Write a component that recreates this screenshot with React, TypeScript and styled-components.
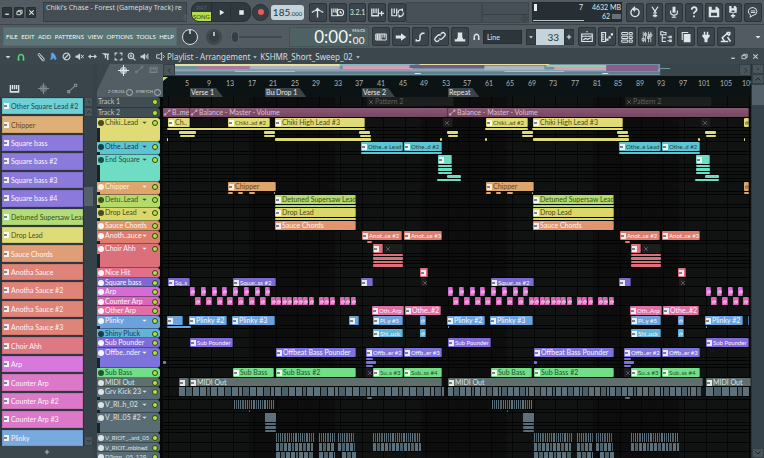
import React from "react";
import styled, { createGlobalStyle, css } from "styled-components";

const NARROW = `Lato, "Noto Sans", sans-serif`;
const UI = `"Noto Sans", "Open Sans", sans-serif`;

const GlobalStyle = createGlobalStyle`
  *, *::before, *::after { box-sizing: border-box; }
  html, body, #root { height: 100%; margin: 0; }
  body { background: #3b464c; color: #dfe7ea; font: 7px/10px ${UI}; overflow: hidden; }
  button, input, select { font: inherit; color: inherit; margin: 0; padding: 0; border: 0; background: none; }
  button { display: inline-flex; align-items: center; justify-content: center; cursor: pointer; }
`;

/* ---------- glyphs ---------- */

type GlyphName = keyof typeof GLYPHS;

const GLYPHS = {
  min: <path d="M3 12h8" strokeWidth="3" />,
  restore: <path d="M2 6h9v7H2zM5 6V3h9v7h-3" strokeWidth="2" />,
  close: <path d="M3 3l10 10M13 3L3 13" strokeWidth="2.4" />,
  play: <path d="M5 3l8 5-8 5z" fill="currentColor" stroke="none" />,
  stop: <path d="M4 4h8v8H4z" fill="currentColor" stroke="none" />,
  metronome: <path d="M1 8q7-6 14 0M8 14V3M5 6l3-3 3 3" strokeWidth="1.6" />,
  wait: <path d="M1 3v9h7V3M3.500 3v5M6 3v5M1 12h8M11.500 4a4 4 0 1 0 .1 0M11.500 6v2.500h2" strokeWidth="1.500" />,
  overdub: <path d="M1 3v9h8V3M3.500 3v6M6.300 3v6M1 12h8M10 9h6M13 6v6" strokeWidth="1.600" />,
  loop: <path d="M1 3v9h6V3M4 3v6M9 9a3 3.500 0 0 1 5-3.500V3M15 8a3 3.500 0 0 1-5 3.500V14" strokeWidth="1.500" />,
  piano: <path d="M1 4h14v8H1zM1 6.600h7M1 9.300h7M3.300 4v8M5.600 4v8M8 4v8M10.500 4v5M13 4v5" strokeWidth="1.300" />,
  keys: <path d="M2 3v10h12V3M5 3v6M8 3v6M11 3v6M2 12.500h12" strokeWidth="2" />,
  arrow: <path d="M1 6h7V3l7 5-7 5v-3H1z" fill="currentColor" stroke="none" />,
  note: <path d="M3 13h3q2 0 2-3V7q0-3 4-4M10 3h4M3 11v3" strokeWidth="2" />,
  link: <path d="M7 12l-1 1q-2 2-4 0t0-4l3-3q2-2 4 0M9 4l1-1q2-2 4 0t0 4l-3 3q-2 2-4 0" strokeWidth="1.700" />,
  hat: <path d="M5 2h6v7H5zM1 11h14v3H1zM4 9h8v2H4z" fill="currentColor" stroke="none" />,
  magnet: <path d="M4 14V8a4 4 0 0 1 8 0v6M2.500 12h3M10.500 12h3" strokeWidth="2.400" />,
  undo: <path d="M5 4A5.500 5.500 0 1 0 11 4M11 4H6M8 1L5 4l3 3" strokeWidth="1.800" />,
  cut: <path d="M4 1l6 9M12 1L6 10M8 10v5M5 13h6" strokeWidth="1.800" />,
  mic: <><path d="M6 1h4v8H6z" fill="currentColor" stroke="none" /><path d="M3.500 6v3q0 3 4.500 3t4.500-3V6M8 12v3M5 15h6" strokeWidth="1.500" /></>,
  help: <path d="M5 5q0-3.500 3.300-3.500T11.500 5q0 1.500-2 2.600T8 10.500M8 12.500v2.500" strokeWidth="2.400" />,
  save: <path fillRule="evenodd" d="M1 1h11l3 3v11H1zM4 9v4h8V9zM5 1v4h5V1z" fill="currentColor" stroke="none" />,
  saveAs: <><path fillRule="evenodd" d="M3 0h8l2 2v7H3zM6 6v2h4V6zM6 0v3h3V0z" fill="currentColor" stroke="none" /><path d="M8 10v6M5 13h6" strokeWidth="1.800" /></>,
  chat: <path d="M8 2a6 5.300 0 0 0-3 10l-1 3 4-2.500A6 5.300 0 0 0 8 2M5 6.500h6M5 8.700h6" strokeWidth="1.300" />,
  playlist: <path d="M1 4h14v10H1zM1 7h14M3 12l3-2 3 1 4-2M7 1h2" strokeWidth="1.600" />,
  roll: <><path d="M1 2h5v12H1zM1 5h3M1 8h3M1 11h3" strokeWidth="1.600" /><path d="M7 10h3v3H7zM10 7h3v3h-3zM13 3h3v3h-3z" fill="currentColor" stroke="none" /></>,
  rack: <path d="M1 2h8v3H1zM1 7h8v3H1zM1 12h8v3H1zM11 2h4v3h-4zM11 7h4v3h-4zM11 12h4v3h-4z" strokeWidth="1.300" />,
  mixer: <path d="M3 1v14M6 1v14M10 1v14M13 1v14M1.500 10h3v3h-3zM4.700 3h3v3h-3zM8.500 7h3v3h-3zM11.500 4h3v3h-3z" strokeWidth="1" />,
  browser: <path d="M1 5V1h3l1 1h3v3zM3 5v9h5M3 9h5M10 8h2M10 13h2M13 7h2v2h-2zM13 12h2v2h-2z" strokeWidth="1.400" />,
  copy: <><path d="M5 4h9v11H5z" fill="currentColor" stroke="none" /><path d="M3 12V2h8" strokeWidth="1.500" /></>,
  plug: <path d="M5 1h2v4h2V1h2v4h2v2l-3 4v4H6v-4L3 7V5h2z" fill="currentColor" stroke="none" />,
  lamp: <path d="M1 14h10M6 14L3 9l7-6M8 3l5 3M10 8l4 6M9 2h4v3" strokeWidth="2" />,
  pencil: <path d="M3 4l2-2 8 9v3h-3zM5 2l8 9M4 5l7 8" strokeWidth="1.300" />,
  brush: <path d="M4 2q4-1 6 3l3 7-2 2-3-4-5 4 1-6z" fill="currentColor" stroke="currentColor" />,
  ban: <path d="M8 2a6 6 0 1 0 .1 0M4 12l8-8" strokeWidth="2" />,
  mute: <><path d="M1 6h3l5-4v12L4 10H1z" fill="currentColor" stroke="none" /><path d="M10.500 5l5 6M15.500 5l-5 6" strokeWidth="1.700" /></>,
  slip: <path d="M0 8l5-4v3h6V4l5 4-5 4V9H5v3z" fill="currentColor" stroke="none" />,
  slice: <><path d="M1 2h8v5z" fill="currentColor" stroke="none" /><path d="M8 5v6M12 4v10M9 4h5" strokeWidth="2.500" /></>,
  marquee: <path d="M2 6V2h4M10 2h4v4M14 10v4h-4M6 14H2v-4" strokeWidth="2" />,
  zoom: <path d="M7 2a5 5 0 1 0 .1 0M11 11l4 4M4.500 7h5M7 4.500v5" strokeWidth="2" />,
  speaker: <><path d="M1 6h3l5-4v12L4 10H1z" fill="currentColor" stroke="none" /><path d="M11 5v6M14 3v10" strokeWidth="1.700" /></>,
  preview: <path d="M1 5h5l4-4v14l-4-4H1zM12 5l3 3-3 3" strokeWidth="1.700" />,
  wave: <path d="M0 8h16M4 5v6M6 3v10M8 0v16M10 3v10M12 5v6" strokeWidth="1.500" />,
  automation: <path d="M2 13l10-9M1 14h3v-3H1zM11 5h3V2h-3z" strokeWidth="1.600" />,
  down: <path d="M3 6h10l-5 5z" fill="currentColor" stroke="none" />,
  chevDown: <path d="M3 5l5 5 5-5" strokeWidth="2" />,
  chevUp: <path d="M3 11l5-5 5 5" strokeWidth="2" />,
  chevLeft: <path d="M10 3L5 8l5 5" strokeWidth="2" />,
  chevRight: <path d="M6 3l5 5-5 5" strokeWidth="2" />,
  plus: <path d="M8 2v12M2 8h12" strokeWidth="3" />,
  dot: <path d="M6 8h4" strokeWidth="3" />,
  clock: <path d="M8 2a6 6 0 1 0 .1 0M8 5v3h3" strokeWidth="1.600" />,
};

const Svg = styled.svg`flex: none; display: block; fill: none; stroke: currentColor;`;
const Glyph = ({ name, size = 10 }: { name: GlyphName; size?: number }) => (
  <Svg width={size} height={size} viewBox="0 0 16 16" aria-hidden="true">{GLYPHS[name]}</Svg>
);

/* ---------- toolbars ---------- */

const Shell = styled.div`display: flex; flex-direction: column; height: 100vh; overflow: hidden;`;

const Bar = styled.div<{ $tone?: "upper" | "lower" }>`
  flex: none; display: flex; align-items: center; height: ${p => (p.$tone === "upper" ? 25 : 24)}px;
  padding: 0 2px; background: #515b61; border-bottom: 1px solid #3a4449;
`;
const Space = styled.div<{ $w: number }>`flex: none; width: ${p => p.$w}px;`;
const Grow = styled.div`flex: 1;`;

const WindowButtons = styled.div`display: flex; gap: 2px; width: 36px; flex: none;`;
const WindowButton = styled.button`
  width: 10px; height: 11px; background: #2d363b; border: 1px solid #252d31; border-radius: 1px; color: #dfe7ea;
`;
const Hint = styled.div`
  flex: none; display: flex; justify-content: space-between; width: 144px; height: 20px; margin-left: 5px;
  padding: 0 2px; background: #434d52; border: 1px solid #353f44; font: 7px/10px ${UI}; white-space: nowrap; color: #d4dcdf;
`;
const HintIcon = styled.span`align-self: flex-end; color: #59646a;`;

const Transport = styled.div`
  flex: none; display: grid; grid-template-columns: 20px 19px 20px; width: 60px; height: 20px; margin-left: 4px;
  background: #30393e; border: 1px solid #272f33; border-radius: 8px; overflow: hidden; color: #e4ecee;
`;
const ModeSwitch = styled.button`flex-direction: column; align-items: stretch; border-right: 1px solid #262e32;
  span { flex: 1; display: block; text-align: center; font: 6px/9px ${NARROW}; color: #56626a; }
  span + span { background: #b3dc4e; color: #2c3a10; }
`;
const TransportButton = styled.button`border-right: 1px solid #283034; &:last-child { border: 0; }`;
const Record = styled.button`
  flex: none; width: 17px; height: 17px; margin: 0 2px 0 1px; border-radius: 50%; background: #343e43; border: 1px solid #2a3236;
  &::after { content: ""; width: 6px; height: 6px; border-radius: 50%; background: #ec5a52; }
`;
const Tempo = styled.div`
  flex: none; display: flex; justify-content: center; align-items: baseline; width: 33px; height: 15px; border-radius: 3px;
  background: #c5d3da; color: #2c383e; font: 10px/14px ${NARROW};
  small { font-size: 6px; }
`;
const ToolGroup = styled.div<{ $w?: number; $n: number }>`
  flex: ${p => (p.$w ? "none" : "1")}; display: grid; grid-template-columns: repeat(${p => p.$n}, 1fr); gap: 2px;
  ${p => p.$w && css`width: ${p.$w}px;`} height: 19px;
`;
const Tool = styled.button`background: #3a444a; border: 1px solid #2b3439; border-radius: 2px; color: #dde5e8; font: 7px/10px ${NARROW};`;
const Panel = styled.div<{ $w: number }>`
  flex: none; display: flex; justify-content: flex-end; width: ${p => p.$w}px; height: 21px;
  background: #465056; border: 1px solid #3d474c;
`;
const PanelFoot = styled.div`flex: 1; display: flex; flex-direction: column; align-items: flex-end; justify-content: space-between; color: #2f393e;
  &::before { content: ""; width: 100%; height: 12px; border-bottom: 1px solid #353f44; }
`;
const Meter = styled.div`
  flex: none; display: grid; grid-template-columns: 51px 37px; width: 90px; height: 20px; padding: 0; margin: 0 4px 0 3px; background: #272f34;
  border: 1px solid #222a2e; font: 7px/9px ${NARROW}; text-align: right; white-space: nowrap;
`;
const CpuLoad = styled.div`display: flex; justify-content: space-between; border-bottom: 1px solid #b9c4c8; padding: 0 1px;
  &::before { content: ""; width: 3px; height: 7px; margin-top: 1px; background: #e8eef0; }
`;
const Chip = styled.i`display: inline-block; width: 9px; height: 5px; margin-left: 2px; background: #66727a;`;

const Menu = styled.nav`
  flex: none; display: flex; justify-content: space-between; align-items: center; width: 174px; height: 19px; padding: 0 2px;
  margin-left: 1px; background: #5b7475; border: 1px solid #536a6b; font: 6px/10px ${NARROW}; color: #f6fafa;
`;
const Knob = styled.div<{ $lit?: boolean }>`
  flex: none; display: flex; justify-content: center; width: 16px; height: 16px; border-radius: 50%; margin: 0 4px;
  background: #353e43; border: ${p => (p.$lit ? "1px solid #d7dfe2" : "3px solid #3e484d")};
  &::after { content: ""; width: 2px; height: 4px; background: #aeb9bd; }
`;
const Fader = styled.input`
  flex: none; appearance: none; width: 52px; height: 14px; margin-left: 4px !important;
  &::-webkit-slider-runnable-track { height: 2px; background: #3f494e; }
  &::-webkit-slider-thumb { appearance: none; width: 8px; height: 12px; margin-top: -5px; border-radius: 4px; background: #343d42; border: 1px solid #5d686d; }
`;
const Clock = styled.div`
  flex: none; display: flex; justify-content: flex-end; align-items: flex-start; width: 80px; height: 20px; padding-right: 3px; margin: 0 3px 0 4px;
  background: #4e6263; border: 1px solid #435455; color: #f3f8f8; font: 17px/18px ${NARROW};
`;
const ClockEnd = styled.span`display: flex; flex-direction: column; align-items: center; gap: 1px; font: 10px/12px ${NARROW};
  small { font-size: 4px; line-height: 5px; }
`;
const Snap = styled.select`
  flex: none; appearance: none; width: 39px; height: 14px; padding-left: 3px !important; background: #2c353a !important; border: 1px solid #252d31 !important;
  font: 7px/12px ${NARROW} !important;
`;
const Step = styled.button`width: 10px; height: 16px; background: #343e43; border: 1px solid #2b3439;`;
const PatternNo = styled.input`
  flex: none; width: 28px; height: 16px; padding-right: 5px !important; background: #c5d3da !important; color: #2c383e !important;
  text-align: right; font: 10px/14px ${NARROW} !important;
`;

/* ---------- playlist title bar ---------- */

const TitleBar = styled.header`
  flex: none; display: flex; align-items: center; height: 15px; padding: 0 3px; background: #3c474d; color: #c4cfd3; white-space: nowrap;
`;
const TitleTools = styled.div`display: flex; align-items: center; width: 149px; flex: none;`;
const TitleTool = styled.button<{ $tone?: string; $w?: number }>`width: ${p => p.$w ?? 13}px; height: 12px; flex: none; color: ${p => p.$tone ?? "#c9d3d7"};`;
const Caption = styled.h1`margin: 0 2px; font: 8px/14px ${UI}; color: #d5dde0;`;

/* ---------- clip picker ---------- */

const Work = styled.div`flex: 1; min-height: 0; display: flex;`;
const Picker = styled.aside`flex: none; display: flex; flex-direction: column; width: 93px; background: #2e383e;`;
const PickerTabs = styled.div`
  flex: none; display: flex; align-items: flex-end; gap: 18px; height: 33px; padding: 0 0 3px 9px; background: #3a454b; color: #7d8990;
  button:first-child { color: #d8e0e3; }
`;
const PickerBody = styled.div`flex: 1; min-height: 0; display: flex;`;
const PickerList = styled.ul`flex: 1; min-width: 0; display: flex; flex-direction: column; gap: 2px; margin: 0; padding: 1px 0 0 2px; list-style: none;`;
const PickerItem = styled.li<{ $c: string; $ink: string }>`
  flex: 1; min-height: 0; display: flex; align-items: center; gap: 2px; padding-left: 2px; overflow: hidden; white-space: nowrap;
  background: ${p => p.$c}; box-shadow: inset 0 0 0 1px rgba(0, 0, 0, .08); color: ${p => p.$ink}; font: 7px/12px ${NARROW};
`;
const Mark = styled.i`
  flex: none; width: 5px; height: 6px; background: rgba(255, 255, 255, .85); display: block;
  &::after { content: ""; display: block; width: 3px; height: 2px; transform: translateY(2px); background: rgba(30, 40, 60, .55); }
`;
const ScrollTrack = styled.div<{ $w: number }>`
  flex: none; display: flex; flex-direction: column; width: ${p => p.$w}px; background: #36424a; color: #1d2529; border-left: 1px solid #28323a;
`;
const ScrollEnd = styled.button`flex: none; height: 10px; width: 100%; background: #4a555b !important; border: 1px solid #343f45 !important;`;
const Thumb = styled.div<{ $before: number; $h: number }>`margin-top: ${p => p.$before}px; height: ${p => p.$h}px; background: #55616a;`;
const AddClip = styled.button`flex: none; height: 12px; background: #3c474d !important; color: #aab5ba;`;
const Divider = styled.div`flex: none; width: 4px; background: #36424a;`;

/* ---------- arrangement ---------- */

const Playlist = styled.main`flex: 1; min-width: 0; display: flex; flex-direction: column; background: #070909;`;
const Head = styled.div`flex: none; display: flex; height: 33px;`;
const Corner = styled.div`
  flex: none; display: flex; flex-direction: column; justify-content: space-between; width: 66px; padding: 0 2px 1px 11px;
  background: linear-gradient(115deg, #3a454b 11px, #535e64 12px);
`;
const CornerIcons = styled.div`display: flex; justify-content: space-between; padding: 1px 3px 0 10px; color: #77838a; svg:first-child { color: #dfe7ea; }`;
const CornerToggles = styled.div`display: flex; justify-content: space-between; font: 4px/8px ${NARROW}; color: #c4cfd3; white-space: nowrap;
  label { display: flex; align-items: center; gap: 1px; }
  input { appearance: none; width: 7px; height: 7px; border: 1px solid #aab5ba; border-radius: 50%; }
`;
const Timeline = styled.div`flex: 1; min-width: 0; display: flex; flex-direction: column;`;
const Overview = styled.div`flex: none; display: flex; height: 12px; background: #3a4549; color: #c4cfd3;`;
const OverviewButton = styled.button`flex: none; width: 12px; background: #4a555b !important; border: 1px solid #343f45 !important; color: #20292d !important;`;
const OverviewMap = styled.svg`flex: 1; min-width: 0; height: 11px; display: block;`;
const Ruler = styled.div`flex: 1; position: relative; overflow: hidden; background: #0c1315; font: 7px/8px ${NARROW}; color: #a9b4b8;`;
const BarNo = styled.span`position: absolute; top: 3px; width: 20px; text-align: center;`;
const Marker = styled.button`
  position: absolute; bottom: 0; height: 9px; padding: 0 9px 0 1px !important; font: 7px/9px ${NARROW} !important; color: #e0e6e8; white-space: nowrap;
  background: #3a4447 !important; clip-path: polygon(0 0, calc(100% - 7px) 0, 100% 100%, 0 100%);
`;
const PlayPos = styled.i`position: absolute; left: 0; top: 1px; border: solid transparent; border-width: 0 5px 5px 0; border-top: 4px solid #bde35a;`;
const Tracks = styled.div`flex: 1; min-height: 0; overflow: hidden; display: flex; flex-direction: column;`;
const TrackRow = styled.section<{ $h: number }>`flex: none; display: flex; height: ${p => p.$h}px;`;
const TrackHead = styled.header<{ $c: string; $ink: string; $small: boolean }>`
  flex: none; display: flex; align-items: flex-start; width: 63px; margin-right: 3px; padding: 0 2px 0 1px; gap: 1px; height: 100%;
  background: linear-gradient(#1b2328, #1b2328) 0 10px / 3px 100% no-repeat, ${p => p.$c}; color: ${p => p.$ink};
  border-bottom: 1px solid rgba(20, 28, 32, .45); border-radius: 0 3px 3px 0; font: ${p => (p.$small ? 6 : 7)}px/9px ${NARROW}; white-space: nowrap;
`;
const Info = styled.i`flex: none; width: 6px; height: 6px; margin-top: 2px; border-radius: 3px; background: currentColor;`;
const TrackName = styled.span`flex: 1; min-width: 0;`;
const Fold = styled.span`flex: none; margin: 1px 3px 0 0;`;
const Led = styled.input`
  flex: none; appearance: none; width: 6px; height: 6px; margin-top: 2px !important; border-radius: 50%; background: #b2e04a !important; border: 1px solid #2d4a12 !important;
`;
const Lane = styled.div`
  flex: 1; min-width: 0; position: relative; overflow: hidden; border-bottom: 1px solid #020303;
  background:
    repeating-linear-gradient(90deg, transparent 0 5px, #060606 5px 6px, transparent 6px 27px, #060606 27px 28px, transparent 28px 43px),
    repeating-linear-gradient(90deg, transparent 0 86px, rgba(0, 0, 0, .25) 86px 172px),
    #111212;
`;
const SubLine = styled.hr<{ $top: number }>`position: absolute; left: 0; right: 0; top: ${p => p.$top}px; height: 1px; margin: 0; border: 0; background: #020303;`;
const ClipBox = styled.div<{ $c: string; $ink: string; $kind: Kind; $small: boolean }>`
  position: absolute; top: 0; height: 9px; display: flex; align-items: center; gap: 1px; overflow: hidden; white-space: nowrap;
  padding-left: 1px; font: ${p => (p.$small ? 6 : 7)}px/9px ${NARROW}; color: ${p => p.$ink}; background: ${p => p.$c}; border-radius: 1px;
  box-shadow: inset -1px 0 0 rgba(0, 0, 0, .3);
  ${p => p.$kind === "muted" && css`background: #1d1f1f; color: #5b6060;`}
`;
const TakeBox = styled.div<{ $c: string; $row: number }>`
  position: absolute; top: ${p => TAKE_TOP[p.$row]}px; height: ${p => TAKE_H[p.$row]}px; background: ${p => p.$c}; border-radius: 1px;
`;
const Slices = styled.svg`position: absolute; top: 0; height: 9px; display: block;`;

const TAKE_TOP = [10, 13, 17, 20, 24];
const TAKE_H = [2, 3, 2, 3, 2];
const PHRASE = 258;

type Kind = "clip" | "muted" | "auto";
type Clip = [x: number, w: number, label?: string, kind?: Kind];
type Take = [row: number, x: number, w: number];
type Cut = [x: number, w: number, step: number];
interface Track {
  name: string; h: number; c: string; ink: string; clipInk?: string; fold?: boolean; plain?: boolean;
  clips?: Clip[]; takes?: Take[]; cuts?: Cut[];
}

const twice = (list: Clip[]): Clip[] => [...list, ...list.map(([x, ...rest]) => [x + PHRASE, ...rest] as Clip)];
const twiceTakes = (list: Take[]): Take[] => [...list, ...list.map(([r, x, w]) => [r, x + PHRASE, w] as Take)];
const twiceCuts = (list: Cut[]): Cut[] => [...list, ...list.map(([x, w, s]) => [x + PHRASE, w, s] as Cut)];
const run = (start: number, n: number, step: number, w: number): Clip[] =>
  Array.from({ length: n }, (_, i) => [Math.round(start + i * step), w] as Clip);

const DARK = "#4b4a1c";
const WHITE = "#f8f5f8";

const drums: Cut[] = [[113, 38, 3], [156, 16, 3], [175, 17, 3], [210, 48, 3]];

const TRACKS: Track[] = [
  { name: "Track 1", h: 11, c: "#434e54", ink: "#b9c4c8", plain: true, clips: twice([[204, 87, "Pattern 2", "muted"]]) },
  { name: "Track 2", h: 10, c: "#434e54", ink: "#b9c4c8", plain: true,
    clips: [[0, 27, "B..me", "auto"], [27, 258, "Balance - Master - Volume", "auto"], [285, 301, "Balance - Master - Volume", "auto"]] },
  { name: "Chiki..Lead", h: 24, c: "#dfdc78", ink: DARK, fold: true,
    clips: [[5, 22, "Ch.."], ...twice([[65, 42, "Chiki..ad #2"], [112, 90, "Chiki High Lead  #3"], [280, 10, "", "muted"]]), [581, 5]],
    takes: [[0, 4, 198], [0, 322, 43], [0, 369, 91], [1, 16, 17], [2, 17, 15], [3, 4, 1], [3, 581, 1], [3, 322, 2],
      ...twiceTakes([[1, 101, 11], [1, 196, 11], [1, 284, 11], [2, 101, 11], [2, 197, 11], [2, 285, 10], [3, 112, 96], [3, 277, 2]])] },
  { name: "Othe..Lead", h: 13, c: "#5fc4d2", ink: "#173f4a", fold: true,
    clips: twice([[198, 42, "Othe..e Lead"], [241, 38, "Othe..d #2"]]), takes: twiceTakes([[0, 198, 81]]) },
  { name: "End Square", h: 27, c: "#6fdcc4", ink: "#1c4f48", fold: true,
    clips: twice([[275, 14]]), takes: twiceTakes([[0, 275, 14], [1, 275, 14], [2, 275, 14], [3, 284, 14], [4, 274, 24]]) },
  { name: "Chipper", h: 13, c: "#dca66c", ink: "#fbf0e0", clipInk: "#6a4822", fold: true,
    clips: [...twice([[65, 48, "Chipper"]]), [581, 5]], takes: [...twiceTakes([[0, 65, 5], [0, 75, 5], [0, 86, 6], [0, 111, 1]]), [0, 581, 5]] },
  { name: "Detu..Lead", h: 13, c: "#b4da6c", ink: "#3e5218", fold: true,
    clips: twice([[112, 81, "Detuned Supersaw Lead"]]), takes: twiceTakes([[0, 112, 81]]) },
  { name: "Drop Lead", h: 13, c: "#dad86a", ink: DARK, fold: true,
    clips: twice([[112, 81, "Drop Lead"]]), takes: twiceTakes([[0, 112, 81]]) },
  { name: "Sauce Chords", h: 10, c: "#e0956c", ink: WHITE, clips: twice([[112, 81, "Sauce Chords"]]) },
  { name: "Anoth..auce", h: 13, c: "#de7d6c", ink: WHITE, fold: true,
    clips: twice([[199, 40, "Anot..ce #2"], [241, 38, "Anot..ce #3"]]), takes: twiceTakes([[0, 204, 5]]) },
  { name: "Choir Ahh", h: 24, c: "#dc707a", ink: WHITE, fold: true,
    clips: twice([[210, 10], [221, 19, "", "muted"]]), takes: twiceTakes([[0, 210, 30], [1, 210, 30], [2, 210, 30], [3, 210, 30]]) },
  { name: "Nice Hit", h: 10, c: "#e27088", ink: WHITE, clips: twice([[257, 8]]) },
  { name: "Square bass", h: 9, c: "#7c69d2", ink: WHITE,
    clips: [[5, 22, "Sq..s"], ...twice([[70, 43, "Squar..ss #2"], [198, 12], [258, 6, "", "muted"]])] },
  { name: "Arp", h: 10, c: "#d86ad4", ink: WHITE, clips: [...twice(run(27, 8, 10.75, 5)), ...run(543, 4, 10.75, 5)] },
  { name: "Counter Arp", h: 9, c: "#da66ba", ink: WHITE,
    clips: [...twice([...run(32, 7, 10.75, 6), ...run(108, 8, 5.4, 5), ...run(156, 3, 5.4, 5), ...run(177, 3, 5.4, 5)]), ...run(548, 4, 10.75, 6)] },
  { name: "Other Arp", h: 10, c: "#e070a4", ink: WHITE, clips: twice([[209, 32, "Oth..Arp"], [242, 36, "Othe..#2"]]) },
  { name: "Plinky", h: 13, c: "#6ba2de", ink: WHITE, fold: true,
    clips: [[4, 16], [186, 10], ...twice([[26, 38, "Plinky #2"], [69, 43, "Plinky #3"], [210, 30, "Pl..y #5"], [257, 6]]), [542, 38, "Plinky #2"], [585, 1]],
    takes: [[0, 4, 24], [0, 285, 1], [0, 543, 1]] },
  { name: "Shiny Pluck", h: 9, c: "#62b4d6", ink: "#163c50", clipInk: WHITE, clips: twice([[210, 30, "Shi..uck"], [257, 6]]) },
  { name: "Sub Pounder", h: 10, c: "#8069d8", ink: WHITE, clips: [...twice([[27, 43, "Sub Pounder"]]), [543, 43, "Sub Pounder"]] },
  { name: "Offbe..nder", h: 20, c: "#7d73dc", ink: WHITE, fold: true,
    clips: twice([[113, 80, "Offbeat Bass Pounder"], [203, 37, "Offb..er #2"], [241, 38, "Offb..er #3"]]),
    takes: [[1, 0, 3], [1, 371, 3], ...twiceTakes([[0, 203, 7], [1, 203, 10], [2, 203, 7]])] },
  { name: "Sub Bass", h: 10, c: "#72de88", ink: "#235232",
    clips: twice([[70, 41, "Sub Bass"], [113, 80, "Sub Bass #2"], [203, 6, "", "muted"], [210, 30, "Su..s #3"], [241, 38, "Sub..ss #4"]]) },
  { name: "MIDI Out", h: 9, c: "#5e6f6e", ink: "#dde4e3", clips: [[16, 10], [27, 252, "MIDI Out"], [285, 255, "MIDI Out"], [543, 45, "MIDI Out"]] },
  { name: "Grv Kick 23", h: 13, c: "#5a6d76", ink: "#dde4e7", fold: true, cuts: [[16, 265, 7], [285, 253, 6], [543, 43, 8]], takes: twiceTakes([[0, 204, 5]]) },
  { name: "V_RI..h_02", h: 13, c: "#5a6d76", ink: "#dde4e7", fold: true, cuts: twiceCuts([[71, 41, 3]]), takes: twiceTakes([[0, 86, 1]]) },
  { name: "V_RI..05 #2", h: 20, c: "#5a6d76", ink: "#dde4e7", fold: true, cuts: twiceCuts([[102, 11, 12]]), takes: twiceTakes([[0, 102, 11], [1, 102, 11], [2, 102, 11]]) },
  { name: "V_RIOT_..ard_05", h: 10, c: "#5a6d76", ink: "#dde4e7", cuts: twiceCuts(drums) },
  { name: "V_RIOT..mbined", h: 9, c: "#5a6d76", ink: "#dde4e7", cuts: twiceCuts(drums.map(([x, w]) => [x, w, 4] as Cut)) },
  { name: "D3ron...05_129", h: 10, c: "#5a6d76", ink: "#dde4e7", cuts: twiceCuts([[113, 37, 5], [156, 16, 5], [179, 14, 5]]) },
];

const TAKE_ROWS: Record<number, number> = { 13: 1, 20: 3, 24: 4, 27: 5 };

/* Room a label wants at the regular size, icon included. */
const labelRoom = (label = "") => label.length * 3.3 + 8;

const ClipView = ({ clip: [x, w, label, kind = "clip"], track }: { clip: Clip; track: Track }) => (
  <ClipBox
    $kind={kind}
    $small={labelRoom(label) > w}
    $c={kind === "auto" ? "linear-gradient(#8a5873, #744761)" : track.c}
    $ink={kind === "auto" ? "#d9c3cf" : track.clipInk ?? track.ink}
    style={{ left: x, width: w }}
  >
    {kind === "auto" ? <Glyph name="automation" size={7} /> : kind === "muted" ? <Glyph name="close" size={6} /> : w > 6 ? <Mark /> : null}
    {w <= 6 && kind === "clip" && w > 4 && <Glyph name="restore" size={4} />}
    {label}
  </ClipBox>
);

const CutView = ({ cut: [x, w, step] }: { cut: Cut }) => {
  const rects: React.ReactNode[] = [];
  for (let at = 0, i = 0; at < w; i++) {
    const len = Math.min(w - at, step === 3 ? 1 + (i % 5 === 4 ? 1 : 0) : Math.max(2, step - 1 - ((i * 7) % 5 === 3 ? 3 : 0)));
    rects.push(<rect key={i} x={at} y="0" width={len} height="9" fill={i % 3 === 1 ? "#4c606a" : "#5c717c"} />);
    at += len + 1;
  }
  return <Slices width={w} style={{ left: x }} aria-hidden="true">{rects}</Slices>;
};

const TrackView = ({ track }: { track: Track }) => (
  <TrackRow $h={track.h}>
    <TrackHead $c={track.c} $ink={track.ink} $small={track.name.length > 12}>
      {!track.plain && <Info />}
      <TrackName>{track.name}</TrackName>
      {track.fold && <Fold><Glyph name="down" size={7} /></Fold>}
      <Led type="checkbox" defaultChecked aria-label={`${track.name} enabled`} />
    </TrackHead>
    <Lane>
      {TAKE_TOP.slice(0, TAKE_ROWS[track.h] ?? 0).map(top => <SubLine key={top} $top={top - 1} />)}
      {track.clips?.map((clip, i) => <ClipView key={i} clip={clip} track={track} />)}
      {track.cuts?.map((cut, i) => <CutView key={i} cut={cut} />)}
      {track.takes?.map(([row, x, w], i) => <TakeBox key={i} $row={row} $c={track.c} style={{ left: x, width: w }} />)}
    </Lane>
  </TrackRow>
);

const PICKER: [string, string, string][] = [
  ["Other Square Lead #2", "#6fd0d6", "#23484c"], ["Chipper", "#deb077", "#5e4424"],
  ["Square bass", "#8c79dc", WHITE], ["Square bass #2", "#8c79dc", WHITE], ["Square bass #3", "#8c79dc", WHITE], ["Square bass #4", "#8c79dc", WHITE],
  ["Detuned Supersaw Lead", "#b2dc78", "#3c4f20"], ["Drop Lead", "#dedc78", "#504f24"], ["Sauce Chords", "#e09e78", WHITE],
  ["Anotha Sauce", "#e08378", WHITE], ["Anotha Sauce #2", "#e08378", WHITE], ["Anotha Sauce #2", "#e08378", WHITE], ["Anotha Sauce #3", "#e08378", WHITE],
  ["Choir Ahh", "#de7882", WHITE], ["Arp", "#d878dc", WHITE], ["Counter Arp", "#dc78c8", WHITE], ["Counter Arp #2", "#dc78c8", WHITE],
  ["Counter Arp #3", "#dc78c8", WHITE], ["Plinky", "#78aade", WHITE],
];

const MARKERS: [string, number][] = [["Verse 1", 27], ["Bui", 102], ["Drop 1", 112], ["Verse 2", 199], ["Repeat", 285]];
const BARS = Array.from({ length: 27 }, (_, i) => 5 + i * 4);

const MAP_STRIPES: [number, number, number, number, string][] = [
  [0, 5, 486, 2, "#86a4b6"], [0, 8, 486, 2, "#617e8b"],
  [0, 0, 200, 2, "#e4dea0"], [22, 2, 60, 3, "#a67c9c"], [75, 2, 90, 3, "#acb4bc"], [165, 0, 75, 2, "#7abac4"], [168, 2, 70, 3, "#dc9cb4"],
  [235, 1, 75, 3, "#7a5686"], [245, 0, 130, 1, "#e4dea0"], [310, 2, 60, 4, "#acb4bc"], [372, 1, 60, 2, "#9acaa8"], [380, 3, 68, 3, "#dc9cb4"],
  [432, 1, 52, 6, "#85608c"], [60, 7, 60, 1, "#a4c0d0"], [330, 7, 60, 1, "#a4c0d0"], [240, 9, 6, 1, "#d8e4e8"], [428, 9, 6, 1, "#d8e4e8"],
  [486, 4, 10, 1, "#7795a8"],
];

const tools = (names: GlyphName[], size = 12) => names.map(n => <Tool key={n} aria-label={n}><Glyph name={n} size={size} /></Tool>);

export default function App() {
  return (
    <Shell>
      <GlobalStyle />
      <Bar $tone="upper">
        <WindowButtons>
          {(["min", "restore", "close"] as const).map(n => <WindowButton key={n} aria-label={n}><Glyph name={n} size={7} /></WindowButton>)}
        </WindowButtons>
        <Hint>Chiki's Chase - Forest (Gameplay Track) re<HintIcon><Glyph name="mic" size={7} /></HintIcon></Hint>
        <Transport>
          <ModeSwitch><span>PAT</span><span>SONG</span></ModeSwitch>
          <TransportButton aria-label="Play"><Glyph name="play" size={9} /></TransportButton>
          <TransportButton aria-label="Stop"><Glyph name="stop" size={9} /></TransportButton>
        </Transport>
        <Record aria-label="Record" />
        <Tempo>185<small>.000</small></Tempo>
        <Space $w={5} />
        <ToolGroup $w={97} $n={5}>
          {tools(["metronome", "wait"], 13)}
          <Tool>3.2.1</Tool>
          {tools(["overdub", "loop"], 13)}
        </ToolGroup>
        <Panel $w={76} />
        <Panel $w={47}><PanelFoot><Glyph name="clock" size={7} /></PanelFoot></Panel>
        <Meter>
          <CpuLoad>7</CpuLoad>
          <div>4632 MB<br />62<Chip /></div>
        </Meter>
        <ToolGroup $n={7}>{tools(["undo", "cut", "mic", "help", "save", "saveAs", "chat"])}</ToolGroup>
      </Bar>

      <Bar $tone="lower">
        <Menu>{["FILE", "EDIT", "ADD", "PATTERNS", "VIEW", "OPTIONS", "TOOLS", "HELP"].map(m => <button key={m}>{m}</button>)}</Menu>
        <Space $w={1} />
        <Knob $lit />
        <Knob />
        <Fader type="range" defaultValue={2} aria-label="Master pitch" />
        <Space $w={3} />
        <Clock>0:00:<ClockEnd><small>M:S:CS</small>00</ClockEnd></Clock>
        <ToolGroup $w={97} $n={5}>{tools(["piano", "arrow", "note", "link", "hat"])}</ToolGroup>
        <Space $w={3} />
        <Glyph name="magnet" size={9} />
        <Space $w={2} />
        <Snap aria-label="Snap"><option>Line</option></Snap>
        <Space $w={4} />
        <Step aria-label="Pattern menu"><Glyph name="down" size={6} /></Step>
        <PatternNo aria-label="Pattern" defaultValue="33" />
        <Step aria-label="Add pattern"><Glyph name="plus" size={6} /></Step>
        <Space $w={4} />
        <ToolGroup $w={157} $n={8}>{tools(["playlist", "roll", "rack", "mixer", "browser", "copy", "plug", "lamp"])}</ToolGroup>
        <Grow />
        <Glyph name="down" size={8} />
      </Bar>

      <TitleBar>
        <TitleTools>
          <TitleTool aria-label="Menu" $w={10}><Glyph name="down" size={8} /></TitleTool>
          <TitleTool aria-label="Snap to grid" $tone="#58d080" $w={16}><Glyph name="magnet" size={10} /></TitleTool>
          <Space $w={5} />
          <TitleTool aria-label="Draw"><Glyph name="pencil" size={10} /></TitleTool>
          <TitleTool aria-label="Paint" $tone="#5aa8e0"><Glyph name="brush" size={9} /></TitleTool>
          {(["ban", "mute", "slip", "slice", "marquee", "zoom", "speaker"] as const).map(n => (
            <TitleTool key={n} aria-label={n}><Glyph name={n} size={9} /></TitleTool>
          ))}
        </TitleTools>
        <Space $w={4} />
        <Glyph name="preview" size={9} />
        <Caption>Playlist - Arrangement</Caption>
        <Glyph name="down" size={6} />
        <Caption>KSHMR_Short_Sweep_02</Caption>
        <Glyph name="down" size={6} />
        <Grow />
        {(["min", "restore", "close"] as const).map(n => <TitleTool key={n} $w={11} aria-label={`${n} playlist`}><Glyph name={n} size={7} /></TitleTool>)}
      </TitleBar>

      <Work>
        <Picker>
          <PickerTabs>
            {(["keys", "wave", "automation"] as const).map(n => <button key={n} aria-label={n}><Glyph name={n} size={11} /></button>)}
          </PickerTabs>
          <PickerBody>
            <PickerList>
              {PICKER.map(([name, c, ink], i) => <PickerItem key={i} $c={c} $ink={ink}><Mark />{name}</PickerItem>)}
            </PickerList>
            <ScrollTrack $w={10}>
              <ScrollEnd aria-label="Options"><Glyph name="dot" size={6} /></ScrollEnd>
              <ScrollEnd aria-label="Scroll up"><Glyph name="chevUp" size={6} /></ScrollEnd>
              <Thumb $before={70} $h={19} />
              <Grow />
              <ScrollEnd aria-label="Scroll down"><Glyph name="chevDown" size={6} /></ScrollEnd>
            </ScrollTrack>
          </PickerBody>
          <AddClip aria-label="Add"><Glyph name="plus" size={6} /></AddClip>
        </Picker>
        <Divider />
        <Playlist>
          <Head>
            <Corner>
              <CornerIcons><Glyph name="wave" size={11} /><Glyph name="automation" size={9} /><Glyph name="keys" size={9} /></CornerIcons>
              <CornerToggles>
                <label>Z-CROSS<input type="radio" /></label>
                <label>STRETCH<input type="radio" /></label>
              </CornerToggles>
            </Corner>
            <Timeline>
              <Overview>
                <OverviewButton aria-label="Scroll left"><Glyph name="chevLeft" size={7} /></OverviewButton>
                <OverviewMap viewBox="0 0 565 11" preserveAspectRatio="none">
                  <rect width="486" height="11" fill="#748f9e" />
                  {MAP_STRIPES.map(([x, y, w, h, c], i) => <rect key={i} x={x} y={y} width={w} height={h} fill={c} />)}
                </OverviewMap>
                <OverviewButton aria-label="Scroll right"><Glyph name="chevRight" size={7} /></OverviewButton>
              </Overview>
              <Ruler>
                <PlayPos />
                {BARS.map(n => <BarNo key={n} style={{ left: Math.round(n * 5.39 - 13) }}>{n}</BarNo>)}
                {MARKERS.map(([name, x]) => <Marker key={name} style={{ left: x }}>{name}</Marker>)}
              </Ruler>
            </Timeline>
          </Head>
          <Tracks>{TRACKS.map(t => <TrackView key={t.name} track={t} />)}</Tracks>
        </Playlist>
        <ScrollTrack $w={13}>
          <ScrollEnd aria-label="Playlist options"><Glyph name="dot" size={6} /></ScrollEnd>
          <ScrollEnd aria-label="Playlist up"><Glyph name="chevUp" size={8} /></ScrollEnd>
          <Thumb $before={1} $h={20} />
          <Grow />
          <ScrollEnd aria-label="Playlist down"><Glyph name="chevDown" size={8} /></ScrollEnd>
        </ScrollTrack>
      </Work>
    </Shell>
  );
}
